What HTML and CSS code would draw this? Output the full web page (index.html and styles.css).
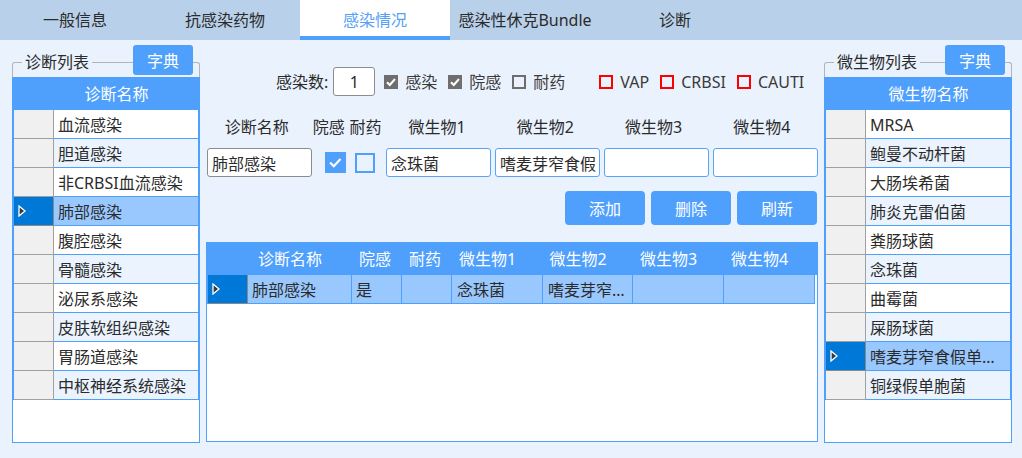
FILE: index.html
```html
<!DOCTYPE html>
<html lang="zh-CN">
<head>
<meta charset="utf-8">
<title>感染情况</title>
<link rel="stylesheet" href="styles.css">
</head>
<body>
<div class="tabs">
  <div class="tab">一般信息</div>
  <div class="tab">抗感染药物</div>
  <div class="tab active">感染情况</div>
  <div class="tab">感染性休克Bundle</div>
  <div class="tab">诊断</div>
</div>
<div class="main">
  <section class="group">
    <span class="group-title">诊断列表</span>
    <button class="btn dict">字典</button>
    <div class="grid side">
      <div class="ghead"><div class="hsp"></div><div class="hc wide">诊断名称</div></div>
      <div class="rows">
        <div class="grow"><div class="rh"></div><div class="cell">血流感染</div></div>
        <div class="grow alt"><div class="rh"></div><div class="cell">胆道感染</div></div>
        <div class="grow"><div class="rh"></div><div class="cell">非CRBSI血流感染</div></div>
        <div class="grow sel"><div class="rh"><svg class="arrow" viewBox="0 0 8 12" width="8" height="12"><path d="M1 1 L7 6 L1 11 Z" fill="#3a3a3a" stroke="#fff" stroke-width="1.3" stroke-linejoin="miter"/></svg></div><div class="cell">肺部感染</div></div>
        <div class="grow"><div class="rh"></div><div class="cell">腹腔感染</div></div>
        <div class="grow alt"><div class="rh"></div><div class="cell">骨髓感染</div></div>
        <div class="grow"><div class="rh"></div><div class="cell">泌尿系感染</div></div>
        <div class="grow alt"><div class="rh"></div><div class="cell">皮肤软组织感染</div></div>
        <div class="grow"><div class="rh"></div><div class="cell">胃肠道感染</div></div>
        <div class="grow alt"><div class="rh"></div><div class="cell">中枢神经系统感染</div></div>
      </div>
    </div>
  </section>

  <section class="center">
    <div class="counts">
      <span class="lbl">感染数:</span>
      <div class="num">1</div>
      <label class="chk"><span class="box gray on"><svg viewBox="0 0 14 14" width="14" height="14"><polyline points="3,7.2 5.8,10 11,4" fill="none" stroke="#fff" stroke-width="2"/></svg></span>感染</label>
      <label class="chk"><span class="box gray on"><svg viewBox="0 0 14 14" width="14" height="14"><polyline points="3,7.2 5.8,10 11,4" fill="none" stroke="#fff" stroke-width="2"/></svg></span>院感</label>
      <label class="chk"><span class="box gray"></span>耐药</label>
      <label class="chk red-first"><span class="box red"></span>VAP</label>
      <label class="chk"><span class="box red"></span>CRBSI</label>
      <label class="chk"><span class="box red"></span>CAUTI</label>
    </div>

    <div class="heads">
      <div class="h h-name">诊断名称</div>
      <div class="h h-yg">院感</div>
      <div class="h h-ny">耐药</div>
      <div class="h h-mic">微生物1</div>
      <div class="h h-mic">微生物2</div>
      <div class="h h-mic">微生物3</div>
      <div class="h h-mic">微生物4</div>
    </div>

    <div class="inputs">
      <input class="field gray-f" value="肺部感染" readonly>
      <span class="bcb on"><svg viewBox="0 0 21 21" width="21" height="21"><polyline points="5,10.5 8.8,14.2 15.5,7" fill="none" stroke="#fff" stroke-width="2.2"/></svg></span>
      <span class="bcb"></span>
      <div class="mics">
        <input class="field blue-f" value="念珠菌" readonly>
        <input class="field blue-f" value="嗜麦芽窄食假单胞菌" readonly>
        <input class="field blue-f" value="" readonly>
        <input class="field blue-f" value="" readonly>
      </div>
    </div>

    <div class="actions">
      <button class="btn act">添加</button>
      <button class="btn act">删除</button>
      <button class="btn act">刷新</button>
    </div>

    <div class="grid mid">
      <div class="ghead">
        <div class="hsp"></div>
        <div class="hc c-name wide">诊断名称</div>
        <div class="hc c-s narrow">院感</div>
        <div class="hc c-s narrow">耐药</div>
        <div class="hc c-m wide">微生物1</div>
        <div class="hc c-m2 wide">微生物2</div>
        <div class="hc c-m wide">微生物3</div>
        <div class="hc c-m wide">微生物4</div>
      </div>
      <div class="rows">
        <div class="grow sel">
          <div class="rh"><svg class="arrow" viewBox="0 0 8 12" width="8" height="12"><path d="M1 1 L7 6 L1 11 Z" fill="#3a3a3a" stroke="#fff" stroke-width="1.3"/></svg></div>
          <div class="cell c-name">肺部感染</div>
          <div class="cell c-s">是</div>
          <div class="cell c-s"></div>
          <div class="cell c-m">念珠菌</div>
          <div class="cell c-m2">嗜麦芽窄食假单胞菌</div>
          <div class="cell c-m"></div>
          <div class="cell c-m"></div>
        </div>
      </div>
    </div>
  </section>

  <section class="group">
    <span class="group-title">微生物列表</span>
    <button class="btn dict">字典</button>
    <div class="grid side">
      <div class="ghead"><div class="hsp"></div><div class="hc wide">微生物名称</div></div>
      <div class="rows">
        <div class="grow"><div class="rh"></div><div class="cell">MRSA</div></div>
        <div class="grow alt"><div class="rh"></div><div class="cell">鲍曼不动杆菌</div></div>
        <div class="grow"><div class="rh"></div><div class="cell">大肠埃希菌</div></div>
        <div class="grow alt"><div class="rh"></div><div class="cell">肺炎克雷伯菌</div></div>
        <div class="grow"><div class="rh"></div><div class="cell">粪肠球菌</div></div>
        <div class="grow alt"><div class="rh"></div><div class="cell">念珠菌</div></div>
        <div class="grow"><div class="rh"></div><div class="cell">曲霉菌</div></div>
        <div class="grow alt"><div class="rh"></div><div class="cell">屎肠球菌</div></div>
        <div class="grow sel"><div class="rh"><svg class="arrow" viewBox="0 0 8 12" width="8" height="12"><path d="M1 1 L7 6 L1 11 Z" fill="#3a3a3a" stroke="#fff" stroke-width="1.3"/></svg></div><div class="cell">嗜麦芽窄食假单胞菌</div></div>
        <div class="grow alt"><div class="rh"></div><div class="cell">铜绿假单胞菌</div></div>
      </div>
    </div>
  </section>
</div>
</body>
</html>
```

FILE: styles.css
```css
* { box-sizing: border-box; }
html, body { margin: 0; padding: 0; }
body {
  width: 1022px;
  height: 458px;
  overflow: hidden;
  background: #eaf2fd;
  font-family: "Noto Sans", "Noto Sans CJK SC", sans-serif;
  font-size: 16px;
  line-height: 20px;
  color: #2b2b2b;
}

/* tabs */
.tabs { display: flex; height: 40px; background: #b9d0ea; }
.tab {
  width: 150px;
  display: flex;
  align-items: center;
  justify-content: center;
  color: #2b2b2b;
}
.tab.active {
  background: #fff;
  color: #55a0f5;
  border-bottom: 4px solid #4f9ffd;
  padding-top: 4px;
}

/* main layout */
.main {
  display: flex;
  gap: 6px;
  padding: 22px 10px 0 12px;
}

/* group boxes */
.group {
  position: relative;
  width: 188px;
  border: 1px solid #b4b4b4;
  border-bottom: 0;
  border-radius: 3px 3px 0 0;
  align-self: flex-start;
}
.group-title {
  position: absolute;
  top: -11px;
  left: 9px;
  padding: 0 3px;
  background: #eaf2fd;
  line-height: 20px;
}
.btn {
  font-family: "Noto Sans", "Noto Sans CJK SC", sans-serif;
  font-size: 16px;
  color: #fff;
  background: #4f9ffd;
  border: 0;
  border-radius: 4px;
  padding: 0;
}
.dict {
  position: absolute;
  top: -18px;
  right: 6px;
  width: 60px;
  height: 30px;
  border-radius: 3px;
}

/* grids */
.grid { background: #fff; border: 1px solid #4f9ffd; overflow: hidden; }
.side { margin: 14px -1px 0; height: 366px; }
.ghead { display: flex; height: 32px; background: #4f9ffd; color: #fff; }
.hsp { width: 41px; flex: none; }
.hc {
  display: flex;
  align-items: center;
  justify-content: center;
  white-space: nowrap;
}
.side .hc { flex: 1; }
.hc.wide { padding-right: 20px; }
.hc.narrow { padding-right: 4px; }
.rows { border-left: 1px solid #4f9ffd; }
.grow { display: flex; height: 29px; }
.rh {
  width: 40px;
  flex: none;
  background: #f0f0f0;
  border-right: 1px solid #a0a0a0;
  border-bottom: 1px solid #a0a0a0;
  display: flex;
  align-items: center;
  padding-left: 4px;
}
.cell {
  background: #fff;
  border-right: 1px solid #4f9ffd;
  border-bottom: 1px solid #4f9ffd;
  padding: 2px 0 0 4px;
  line-height: 26px;
  white-space: nowrap;
  overflow: hidden;
  text-overflow: ellipsis;
}
.side .cell { flex: 1; }
.grow.alt .cell { background: #eaf3fe; }
.grow.sel .cell { background: #99c8ff; }
.grow.sel .rh { background: #0078d7; border-right-color: #8a8a8a; border-bottom-color: #8a8a8a; }
.arrow { display: block; }

/* center panel */
.center { width: 612px; display: flex; flex-direction: column; }
.counts {
  display: flex;
  align-items: center;
  height: 29px;
  margin-top: 5px;
  padding-left: 70px;
}
.lbl { margin-right: 5px; }
.num {
  width: 42px;
  height: 29px;
  border: 1px solid #8c8c8c;
  border-radius: 3px;
  background: #fff;
  display: flex;
  align-items: center;
  justify-content: center;
  margin-right: 9px;
}
.chk { display: flex; align-items: center; gap: 7px; margin-right: 11px; color: #3a3a3a; }
.chk.red-first { margin-left: 23px; }
.box { width: 14px; height: 14px; display: block; flex: none; }
.box.gray { border: 2px solid #6e6e6e; }
.box.gray.on { background: #6e6e6e; border: 0; }
.box.gray.on svg { display: block; }
.box.red { border: 2px solid #ff0000; }

.heads { display: flex; height: 30px; margin-top: 16px; padding-left: 1px; }
.h { display: flex; align-items: center; justify-content: center; white-space: nowrap; }
.h-name { width: 105px; padding-right: 5px; }
.h-yg { width: 35px; }
.h-ny { width: 39px; }
.h-mic { width: 105px; margin-right: 4px; }

.inputs { display: flex; align-items: center; height: 29px; margin-top: 6px; padding-left: 1px; }
.mics { display: flex; gap: 4px; }
.field {
  flex: none;
  height: 29px;
  width: 105px;
  border-radius: 3px;
  background: #fff;
  font-family: "Noto Sans", "Noto Sans CJK SC", sans-serif;
  font-size: 16px;
  color: #2b2b2b;
  padding: 0 3px 0 4px;
  outline: none;
}
.gray-f { border: 1px solid #8c8c8c; margin-right: 13px; }
.blue-f { border: 1px solid #5aa3f6; }
.bcb { flex: none; width: 20px; height: 20px; display: block; border: 2px solid #4f9ffd; margin-right: 11px; }
.bcb.on { width: 21px; height: 21px; background: #4f9ffd; border: 0; margin-right: 9px; margin-top: -1px; }
.bcb.on svg { display: block; }

.actions { display: flex; justify-content: flex-end; gap: 6px; margin-top: 14px; padding-right: 1px; }
.act { width: 80px; height: 34px; }

.mid { margin-top: 17px; height: 200px; width: 612px; }
.mid .hc, .mid .cell { flex: none; }
.c-name { width: 104px; }
.c-s { width: 50px; }
.c-m { width: 91px; }
.c-m2 { width: 90px; }
.mid .cell { padding-left: 4px; }
.mid .cell.c-m, .mid .cell.c-m2 { padding-left: 5px; }
```
